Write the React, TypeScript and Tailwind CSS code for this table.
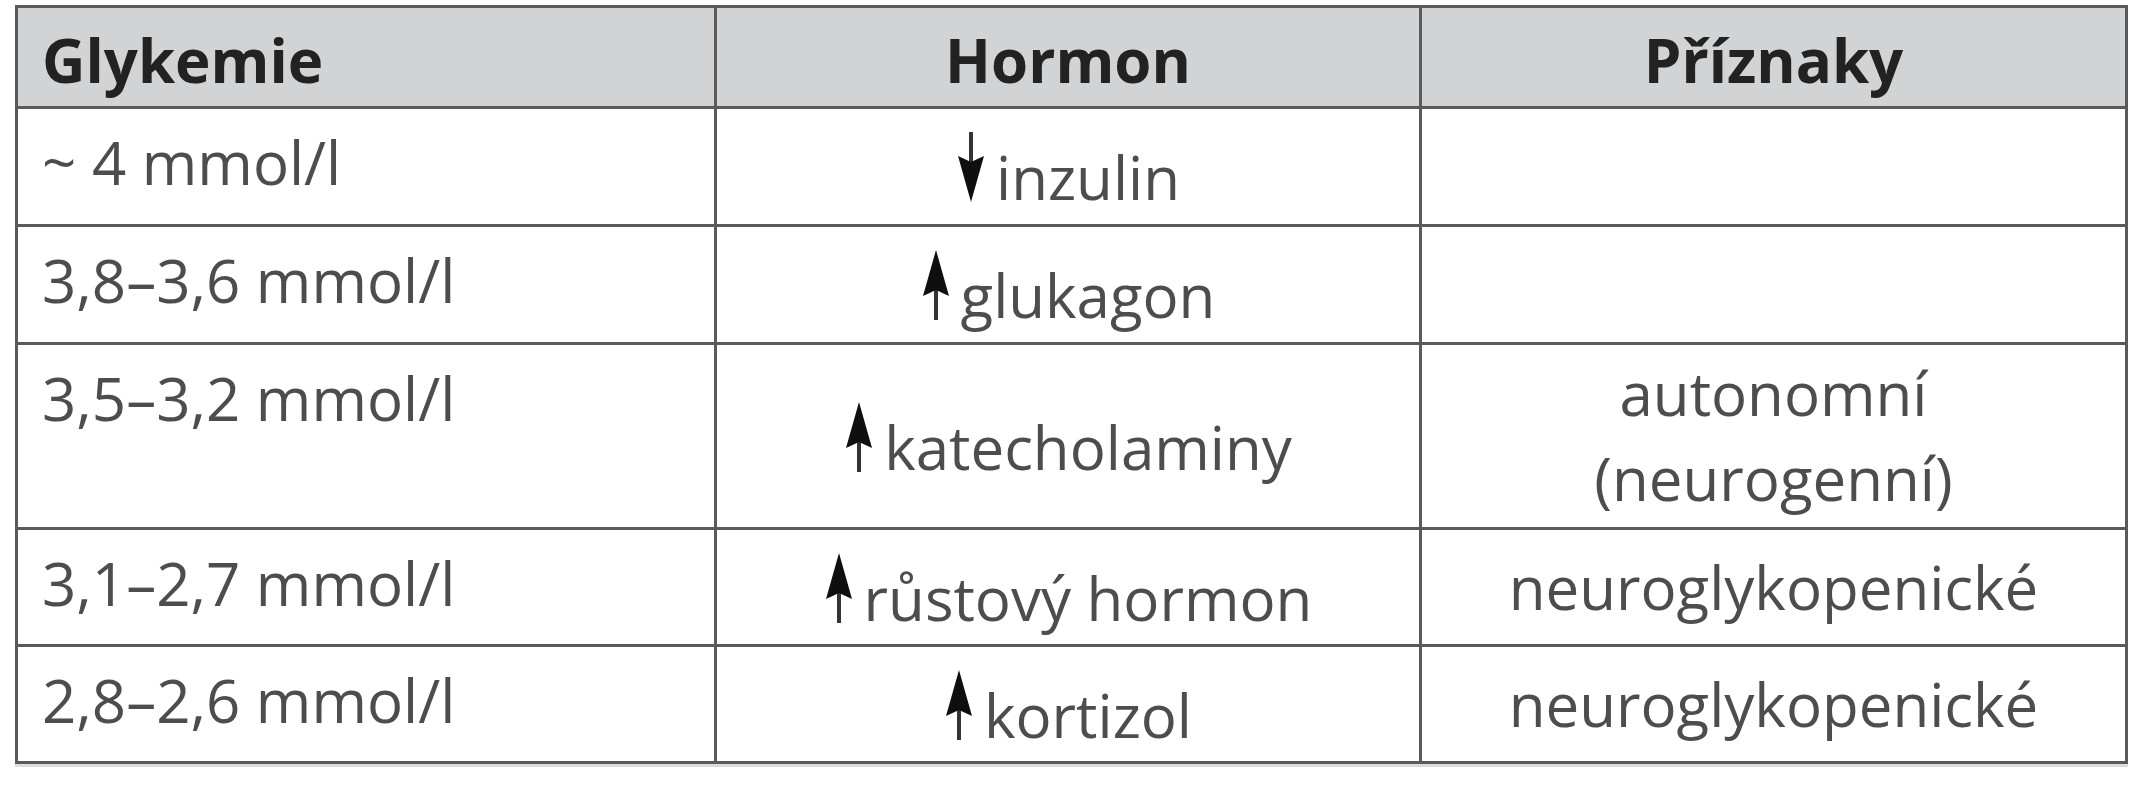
import React from "react";

function Arrow({ up }: { up: boolean }) {
  return (
    <svg
      width="30"
      height="70"
      viewBox="0 0 30 70"
      className="inline-block mr-[10px] -mt-[24px] align-[-2px]"
    >
      {up ? (
        <>
          <rect x="13" y="36" width="4" height="34" fill="#333333" />
          <polygon points="15,0 28,46 15,40 2,46" fill="#0f0f0f" />
        </>
      ) : (
        <>
          <rect x="13" y="0" width="4" height="34" fill="#333333" />
          <polygon points="15,70 28,24 15,30 2,24" fill="#0f0f0f" />
        </>
      )}
    </svg>
  );
}

type RowData = {
  glyk: string;
  up: boolean;
  hormon: string;
  priz: string[];
  h: string;
};

const rows: RowData[] = [
  { glyk: "~ 4 mmol/l", up: false, hormon: "inzulin", priz: [], h: "h-[118px]" },
  { glyk: "3,8–3,6 mmol/l", up: true, hormon: "glukagon", priz: [], h: "h-[118px]" },
  {
    glyk: "3,5–3,2 mmol/l",
    up: true,
    hormon: "katecholaminy",
    priz: ["autonomní", "(neurogenní)"],
    h: "h-[185px]",
  },
  { glyk: "3,1–2,7 mmol/l", up: true, hormon: "růstový hormon", priz: ["neuroglykopenické"], h: "h-[117px]" },
  { glyk: "2,8–2,6 mmol/l", up: true, hormon: "kortizol", priz: ["neuroglykopenické"], h: "h-[117px]" },
];

export default function App() {
  return (
    <div
      className="w-[2145px] h-[800px] bg-white pt-[5px] pl-[15px]"
      style={{ fontFamily: '"Open Sans", "Noto Sans", sans-serif' }}
    >
      <div className="w-[2113px] border-[3px] border-[#5a5a5a] shadow-[0_3px_0_#dcdcdc]">
        {/* Header */}
        <div className="grid grid-cols-[696px_705px_706px] h-[98px] bg-[#d1d3d5] text-[60px] leading-[67px] font-bold text-[#222222]">
          <div className="pl-[24px] pt-[19px]">Glykemie</div>
          <div className="border-l-[3px] border-[#5a5a5a] pt-[19px] text-center">Hormon</div>
          <div className="border-l-[3px] border-[#5a5a5a] pt-[19px] text-center">Příznaky</div>
        </div>
        {rows.map((r, i) => (
          <div
            key={i}
            className={`grid grid-cols-[696px_705px_706px] border-t-[3px] border-[#5a5a5a] text-[60px] leading-[67px] text-[#4d4d4d] ${r.h}`}
          >
            <div className="pl-[24px] pt-[20px]">{r.glyk}</div>
            <div className="border-l-[3px] border-[#5a5a5a] flex items-center justify-center pt-[22px]">
              <span className="whitespace-nowrap">
                <Arrow up={r.up} />
                {r.hormon}
              </span>
            </div>
            <div
              className={`border-l-[3px] border-[#5a5a5a] flex flex-col items-center justify-center ${
                r.priz.length > 1 ? "leading-[85px]" : ""
              }`}
            >
              {r.priz.map((p, j) => (
                <div key={j}>{p}</div>
              ))}
            </div>
          </div>
        ))}
      </div>
    </div>
  );
}
